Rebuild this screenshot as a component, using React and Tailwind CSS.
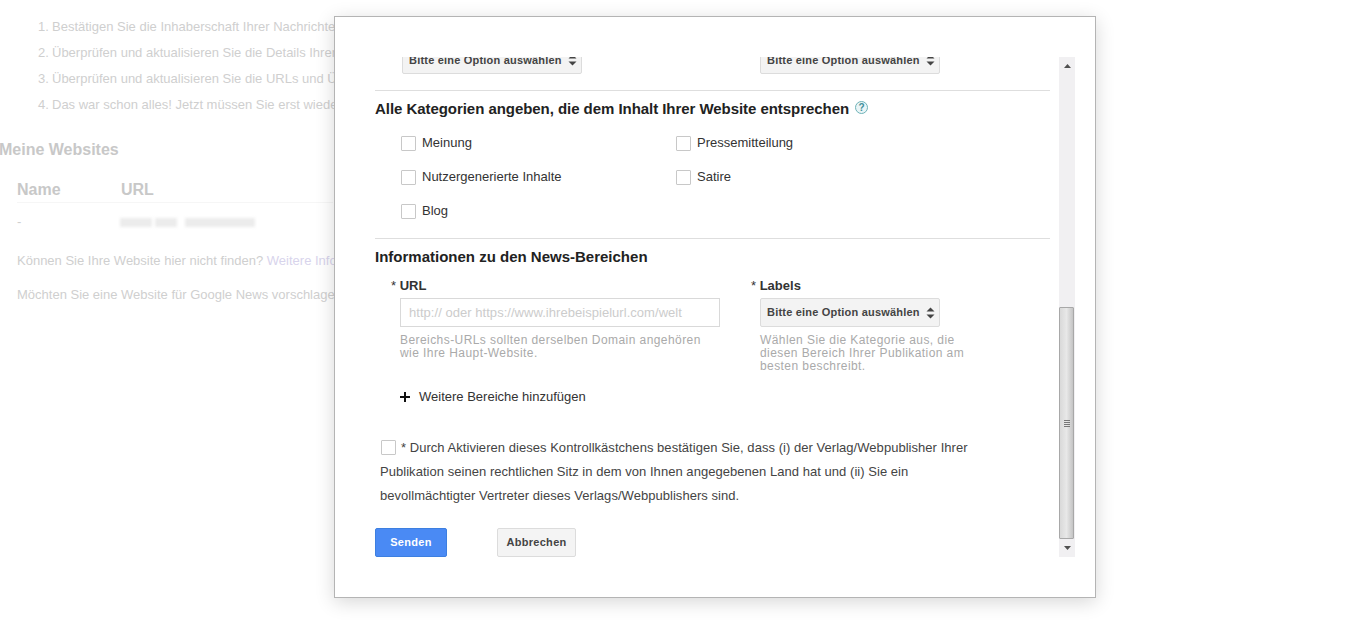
import React from 'react';

const font = "font-['Liberation_Sans',Arial,sans-serif]";

function SelectBox({ className = '' }) {
  return (
    <div className={`flex h-[29px] w-[180px] items-center justify-between rounded-[2px] border border-[#dcdcdc] bg-[#f3f3f3] pl-[6px] pr-[4px] text-[11px] font-bold tracking-[0.2px] text-[#444] ${className}`}>
      <span>Bitte eine Option auswählen</span>
      <svg width="9" height="12" viewBox="0 0 9 12" className="shrink-0">
        <path d="M4.5 0.5 L8.5 4.5 H0.5 Z M0.5 7.5 H8.5 L4.5 11.5 Z" fill="#444" />
      </svg>
    </div>
  );
}

function Check({ label }) {
  return (
    <div className="flex h-[34px] items-center text-[13px] text-[#333]">
      <span className="mr-[6px] h-[15px] w-[15px] rounded-[1px] border border-[#c8c8c8] bg-white" />
      {label}
    </div>
  );
}

function Step({ n, children }) {
  return (
    <li className="flex h-[26px] leading-[26px]">
      <span className="w-[14px] shrink-0">{n}.</span>
      {children}
    </li>
  );
}

function Background() {
  return (
    <div className="text-[13px] text-[#cfcfcf]">
      <ol className="pl-[38px] pt-[14px]">
        <Step n="1">Bestätigen Sie die Inhaberschaft Ihrer Nachrichten-Website</Step>
        <Step n="2">Überprüfen und aktualisieren Sie die Details Ihrer Publikation</Step>
        <Step n="3">Überprüfen und aktualisieren Sie die URLs und Überschriften</Step>
        <Step n="4">Das war schon alles! Jetzt müssen Sie erst wieder warten</Step>
      </ol>
      <h2 className="ml-[-1px] mt-[20px] text-[16px] font-bold leading-[24px] text-[#c8c8c8]">Meine Websites</h2>
      <div className="ml-[17px] mt-[15px] flex h-[26px] w-[316px] items-center border-b border-[#f6f6f6] text-[16px] font-bold text-[#c8c8c8]">
        <span className="w-[104px]">Name</span>
        <span>URL</span>
      </div>
      <div className="ml-[17px] mt-[7px] flex h-[24px] items-center">
        <span className="w-[103px]">-</span>
        <span className="h-[9px] w-[32px] bg-[#ececec] blur-[1.5px]" />
        <span className="ml-[3px] h-[9px] w-[22px] bg-[#ececec] blur-[1.5px]" />
        <span className="ml-[8px] h-[9px] w-[70px] bg-[#ececec] blur-[1.5px]" />
      </div>
      <p className="ml-[17px] mt-[17px] h-[20px] whitespace-nowrap leading-[20px]">
        Können Sie Ihre Website hier nicht finden? <span className="text-[#d8d4ec]">Weitere Informationen</span>
      </p>
      <p className="ml-[17px] mt-[14px] h-[20px] whitespace-nowrap leading-[20px]">Möchten Sie eine Website für Google News vorschlagen?</p>
    </div>
  );
}

function Scrollbar() {
  return (
    <div className="flex h-[500px] w-[16px] shrink-0 flex-col bg-[#f1f0f2]">
      <div className="flex h-[17px] items-center justify-center">
        <svg width="7" height="4" viewBox="0 0 7 4"><path d="M3.5 0 L7 4 H0 Z" fill="#505050" /></svg>
      </div>
      <div className="flex-1" />
      <div className="flex h-[232px] w-[15px] items-center justify-center rounded-[1px] border border-[#a8a8a8] bg-gradient-to-r from-[#d9d9d9] via-[#e8e8e8] to-[#c4c4c4]">
        <div className="flex flex-col gap-[1px]">
          <span className="h-[1px] w-[6px] bg-[#777]" />
          <span className="h-[1px] w-[6px] bg-[#777]" />
          <span className="h-[1px] w-[6px] bg-[#777]" />
          <span className="h-[1px] w-[6px] bg-[#777]" />
        </div>
      </div>
      <div className="flex h-[18px] items-center justify-center">
        <svg width="7" height="4" viewBox="0 0 7 4"><path d="M0 0 H7 L3.5 4 Z" fill="#505050" /></svg>
      </div>
    </div>
  );
}

function Modal() {
  return (
    <div className="absolute left-[334px] top-[16px] h-[582px] w-[762px] border border-[#b4b4b4] bg-white pl-[40px] pt-[40px] shadow-[0_4px_18px_rgba(0,0,0,0.16)]">
      <div className="flex h-[500px] w-[700px]">
        <div className="h-[500px] w-[684px] overflow-hidden">
          <div className="mt-[-12px] w-[675px]">
            <div className="flex h-[29px] pl-[27px]">
              <SelectBox className="pt-[1px]" />
              <SelectBox className="ml-[178px] pt-[1px]" />
            </div>

            <div className="mt-[16px] h-[1px] bg-[#dedede]" />
            <h3 className="mt-[8px] flex h-[20px] items-center text-[15px] font-bold tracking-[-0.05px] text-[#222]">
              Alle Kategorien angeben, die dem Inhalt Ihrer Website entsprechen
              <span className="ml-[6px] mt-[-3px] flex h-[13px] w-[13px] items-center justify-center rounded-full border border-[#6fb3b8] bg-[#eaf5f7] text-[10px] font-bold leading-none tracking-normal text-[#3f8f9a]">?</span>
            </h3>

            <div className="mt-[7px] flex pl-[26px]">
              <div className="w-[275px]">
                <Check label="Meinung" />
                <Check label="Nutzergenerierte Inhalte" />
                <Check label="Blog" />
              </div>
              <div>
                <Check label="Pressemitteilung" />
                <Check label="Satire" />
              </div>
            </div>

            <div className="mt-[10px] h-[1px] bg-[#dedede]" />
            <h3 className="mt-[8px] h-[20px] text-[15px] font-bold leading-[20px] text-[#222]">Informationen zu den News-Bereichen</h3>

            <div className="mt-[9px] flex">
              <div className="ml-[16px] w-[360px]">
                <div className="h-[20px] text-[13px] font-bold leading-[20px] text-[#333]"><span className="font-normal">*</span> URL</div>
                <div className="ml-[9px] mt-[2px] flex h-[29px] w-[320px] items-center border border-[#d9d9d9] pl-[8px] text-[13px] tracking-[0.04px] text-[#ccc]">http:// oder https://www.ihrebeispielurl.com/welt</div>
                <p className="ml-[9px] mt-[7px] w-[305px] text-[12px] leading-[13px] tracking-[0.43px] text-[#aaa]">Bereichs-URLs sollten derselben Domain angehören wie Ihre Haupt-Website.</p>
              </div>
              <div>
                <div className="h-[20px] text-[13px] font-bold leading-[20px] text-[#333]"><span className="font-normal">*</span> Labels</div>
                <SelectBox className="ml-[9px] mt-[2px]" />
                <p className="ml-[9px] mt-[7px] w-[212px] text-[12px] leading-[13px] tracking-[0.42px] text-[#aaa]">Wählen Sie die Kategorie aus, die diesen Bereich Ihrer Publikation am besten beschreibt.</p>
              </div>
            </div>

            <div className="ml-[24px] mt-[14px] flex h-[20px] items-center text-[13px] text-[#333]">
              <svg width="12" height="12" viewBox="0 0 12 12" className="mr-[8px]">
                <path d="M6 1 V11 M1 6 H11" stroke="#111" strokeWidth="2" />
              </svg>
              Weitere Bereiche hinzufügen
            </div>

            <div className="ml-[5px] mt-[29px] w-[600px] text-[13px] leading-[24px] tracking-[0.04px] text-[#444]">
              <span className="ml-[1px] mr-[5px] inline-block h-[15px] w-[15px] translate-y-[3px] rounded-[1px] border border-[#c8c8c8]" />
              * Durch Aktivieren dieses Kontrollkästchens bestätigen Sie, dass (i) der Verlag/Webpublisher Ihrer Publikation seinen rechtlichen Sitz in dem von Ihnen angegebenen Land hat und (ii) Sie ein bevollmächtigter Vertreter dieses Verlags/Webpublishers sind.
            </div>

            <div className="mt-[20px] flex">
              <button className="h-[29px] w-[72px] rounded-[2px] border border-[#3d7fe0] bg-[#4a8af4] text-[11px] font-bold tracking-[0.3px] text-white">Senden</button>
              <button className="ml-[50px] h-[29px] w-[79px] rounded-[2px] border border-[#dcdcdc] bg-[#f4f4f4] text-[11px] font-bold tracking-[0.3px] text-[#444]">Abbrechen</button>
            </div>
          </div>
        </div>
        <Scrollbar />
      </div>
    </div>
  );
}

export default function App() {
  return (
    <div className={`relative h-[621px] w-[1347px] overflow-hidden bg-white ${font}`}>
      <Background />
      <Modal />
    </div>
  );
}
